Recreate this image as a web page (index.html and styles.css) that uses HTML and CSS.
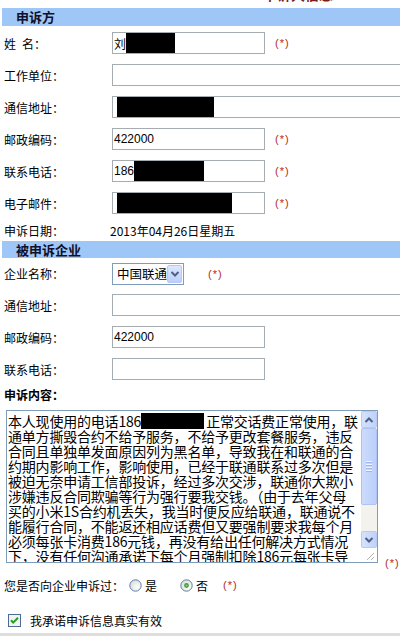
FILE: index.html
```html
<!DOCTYPE html>
<html lang="zh-CN">
<head>
<meta charset="utf-8">
<title>申诉信息</title>
<link rel="stylesheet" href="styles.css">
</head>
<body>
<div class="page">
  <div class="top-title"><span>申诉人信息</span></div>

  <div class="section-head">申诉方</div>
  <div class="rows first">
    <div class="row">
      <div class="label">姓&ensp;名：</div>
      <div class="input short"><span class="val">刘</span><span class="redact r-name"></span></div>
      <span class="req">(*)</span>
    </div>
    <div class="row">
      <div class="label">工作单位：</div>
      <div class="input long"></div>
    </div>
    <div class="row">
      <div class="label">通信地址：</div>
      <div class="input long"><span class="redact r-addr"></span></div>
    </div>
    <div class="row">
      <div class="label">邮政编码：</div>
      <div class="input short"><span class="val">422000</span></div>
      <span class="req">(*)</span>
    </div>
    <div class="row">
      <div class="label">联系电话：</div>
      <div class="input short"><span class="val">186</span><span class="redact r-phone"></span></div>
      <span class="req">(*)</span>
    </div>
    <div class="row">
      <div class="label">电子邮件：</div>
      <div class="input short"><span class="redact r-mail"></span></div>
      <span class="req">(*)</span>
    </div>
    <div class="row date-row">
      <div class="label">申诉日期：</div>
      <div class="date">2013年04月26日星期五</div>
    </div>
  </div>

  <div class="section-head second">被申诉企业</div>
  <div class="rows">
    <div class="row sel-row">
      <div class="label">企业名称：</div>
      <div class="select">
        <span class="sel-text">中国联通</span>
        <span class="sel-btn"><svg width="10" height="8" viewBox="0 0 10 8"><path d="M1.5 2 L5 5.5 L8.5 2" fill="none" stroke="#4d6185" stroke-width="2"/></svg></span>
      </div>
      <span class="req sel-req">(*)</span>
    </div>
    <div class="row">
      <div class="label">通信地址：</div>
      <div class="input long"></div>
    </div>
    <div class="row">
      <div class="label">邮政编码：</div>
      <div class="input short"><span class="val">422000</span></div>
    </div>
    <div class="row">
      <div class="label">联系电话：</div>
      <div class="input short"></div>
    </div>
  </div>

  <div class="content-title">申诉内容：</div>
  <div class="content-row">
    <div class="textarea">
      <div class="ta-text">
        <div class="line">本人现使用的电话186<span class="redact-inline"></span>正常交话费正常使用，联</div>
        <div class="line">通单方撕毁合约不给予服务，不给予更改套餐服务，违反</div>
        <div class="line">合同且单独单发面原因列为黑名单，导致我在和联通的合</div>
        <div class="line">约期内影响工作，影响使用，已经于联通联系过多次但是</div>
        <div class="line">被迫无奈申请工信部投诉，经过多次交涉，联通你大欺小</div>
        <div class="line">涉嫌违反合同欺骗等行为强行要我交钱。（由于去年父母</div>
        <div class="line">买的小米1S合约机丢失，我当时便反应给联通，联通说不</div>
        <div class="line">能履行合同，不能返还相应话费但又要强制要求我每个月</div>
        <div class="line">必须每张卡消费186元钱，再没有给出任何解决方式情况</div>
        <div class="line">下，没有任何沟通承诺下每个月强制扣除186元每张卡导</div>
      </div>
      <div class="scrollbar">
        <div class="sb-btn"><svg width="10" height="8" viewBox="0 0 10 8"><path d="M1.5 6 L5 2.5 L8.5 6" fill="none" stroke="#4d6185" stroke-width="2"/></svg></div>
        <div class="sb-thumb"><span class="grip"></span><span class="grip"></span><span class="grip"></span><span class="grip"></span></div>
        <div class="sb-track"></div>
        <div class="sb-btn"><svg width="10" height="8" viewBox="0 0 10 8"><path d="M1.5 2 L5 5.5 L8.5 2" fill="none" stroke="#4d6185" stroke-width="2"/></svg></div>
        <div class="sb-grip"><svg width="16" height="14" viewBox="0 0 16 14"><path d="M13 5 L6 12 M13 9 L10 12" stroke="#b4b4a8" stroke-width="1"/></svg></div>
      </div>
    </div>
    <span class="req ta-req">(*)</span>
  </div>

  <div class="radio-row">
    <span class="radio-label">您是否向企业申诉过：</span>
    <span class="radio"><svg width="13" height="13" viewBox="0 0 13 13"><defs><radialGradient id="rg" cx="0.65" cy="0.65" r="0.7"><stop offset="0" stop-color="#ffffff"/><stop offset="1" stop-color="#dcdcd6"/></radialGradient></defs><circle cx="6.5" cy="6.5" r="5.7" fill="url(#rg)" stroke="#5f7fa8" stroke-width="1"/></svg></span>
    <span class="opt">是</span>
    <span class="radio second-radio"><svg width="13" height="13" viewBox="0 0 13 13"><circle cx="6.5" cy="6.5" r="5.7" fill="url(#rg)" stroke="#5f7fa8" stroke-width="1"/><circle cx="6.5" cy="6.5" r="2.4" fill="#3aa23a"/><circle cx="6.5" cy="6.5" r="1.1" fill="#7fd17f"/></svg></span>
    <span class="opt">否</span>
    <span class="req radio-req">(*)</span>
  </div>

  <div class="check-row">
    <span class="checkbox"><svg width="13" height="13" viewBox="0 0 13 13"><rect x="0.5" y="0.5" width="12" height="12" fill="#f4f4ef" stroke="#4a6c94"/><path d="M3 6.2 L5.2 8.6 L10 3.8" fill="none" stroke="#21a121" stroke-width="2"/></svg></span>
    <span class="check-text">我承诺申诉信息真实有效</span>
  </div>
  <div class="bottom-band"></div>
</div>
</body>
</html>
```

FILE: styles.css
```css
html, body {
  margin: 0;
  padding: 0;
  overflow: hidden;
  background: #ffffff;
}

body {
  width: 400px;
  height: 636px;
  font-family: "Noto Sans CJK SC", "Liberation Sans", sans-serif;
  font-size: 12px;
  color: #000;
}

.page {
  display: flex;
  flex-direction: column;
}

.top-title {
  height: 8px;
  overflow: hidden;
  padding-left: 263px;
}

.top-title span {
  display: block;
  font-size: 14px;
  line-height: 14px;
  font-weight: bold;
  color: #7a1c1c;
  margin-top: -13px;
}

.section-head {
  margin-left: 2px;
  height: 18px;
  line-height: 18px;
  padding-left: 14px;
  background: #9ec6f6;
  font-size: 13px;
  font-weight: bold;
  color: #10102a;
}

.section-head.second {
  height: 17px;
  line-height: 17px;
}

.rows {
  display: flex;
  flex-direction: column;
}

.rows.first {
  margin-top: 1px;
}

.row {
  display: flex;
  align-items: center;
  height: 32px;
  padding-left: 4px;
  white-space: nowrap;
}

.row.date-row {
  height: 22px;
}

.row.sel-row {
  height: 31px;
}

.label {
  width: 108px;
  flex: none;
}

.date {
  margin-left: -2px;
  font-size: 12px;
}

.input {
  box-sizing: border-box;
  flex: none;
  height: 22px;
  border: 1px solid #a5acb2;
  background: #fff;
  display: flex;
  align-items: stretch;
  padding: 0 0 0 1px;
  font-family: "Liberation Sans", sans-serif;
  font-size: 12px;
}

.input .val {
  display: flex;
  align-items: center;
  font-family: "Liberation Sans", "Noto Sans CJK SC", sans-serif;
}

.input.short {
  width: 153px;
}

.input.long {
  width: 300px;
}

.redact {
  background: #000;
  display: block;
}

.r-name { width: 49px; }
.r-addr { width: 97px; margin-left: 3px; }
.r-phone { width: 70px; }
.r-mail { width: 115px; margin-left: 3px; }

.req {
  color: #b02a2a;
  font-family: "Liberation Sans", sans-serif;
  font-size: 11px;
  letter-spacing: 1px;
  margin-left: 10px;
  line-height: 12px;
}

.select {
  box-sizing: border-box;
  width: 72px;
  height: 22px;
  border: 1px solid #7f9db9;
  display: flex;
  align-items: center;
  padding: 0 1px 0 4px;
  flex: none;
}

.sel-text {
  flex: 1;
  font-size: 12.5px;
}

.sel-btn {
  box-sizing: border-box;
  width: 16px;
  height: 18px;
  border: 1px solid #b6c9f5;
  border-radius: 2px;
  background: linear-gradient(#dde7fd, #bccffa);
  display: flex;
  align-items: center;
  justify-content: center;
}

.sel-req {
  margin-left: 24px;
}

.content-title {
  height: 20px;
  line-height: 20px;
  padding-left: 4px;
  font-weight: bold;
}

.content-row {
  display: flex;
  align-items: flex-end;
  margin-top: 5px;
  padding-left: 6px;
  white-space: nowrap;
}

.textarea {
  box-sizing: border-box;
  width: 372px;
  height: 153px;
  border: 1px solid #7f9db9;
  display: flex;
  flex: none;
  overflow: hidden;
}

.ta-text {
  flex: 1;
  padding: 2px 0 0 1px;
  overflow: hidden;
  font-size: 14px;
  line-height: 15px;
  letter-spacing: -0.2px;
}

.line {
  white-space: nowrap;
}

.redact-inline {
  display: inline-block;
  width: 63px;
  height: 16px;
  background: #000;
  vertical-align: -2px;
  margin-right: 2px;
}

.scrollbar {
  width: 16px;
  flex: none;
  display: flex;
  flex-direction: column;
  background: #f3f2ec;
}

.sb-btn {
  box-sizing: border-box;
  height: 17px;
  border: 1px solid #b9cbf5;
  border-radius: 2px;
  background: linear-gradient(90deg, #d6e2fd, #c0d2fa);
  display: flex;
  align-items: center;
  justify-content: center;
}

.sb-thumb {
  box-sizing: border-box;
  height: 77px;
  border: 1px solid #aec3f3;
  border-radius: 2px;
  background: linear-gradient(90deg, #cddbfc, #bcd0fa);
  display: flex;
  flex-direction: column;
  align-items: center;
  justify-content: center;
  gap: 1px;
}

.grip {
  width: 6px;
  height: 1px;
  background: #eef3ff;
  border-bottom: 1px solid #9db7ee;
}

.sb-track {
  flex: 1;
}

.sb-grip {
  height: 14px;
  background: #fff;
  display: flex;
  align-items: flex-end;
}

.ta-req {
  margin-left: 7px;
  margin-bottom: -6px;
}

.radio-row {
  display: flex;
  align-items: center;
  height: 32px;
  margin-top: 6px;
  padding-left: 4px;
  white-space: nowrap;
}

.radio-label {
  width: 125px;
  flex: none;
}

.radio {
  display: flex;
  width: 13px;
  height: 13px;
}

.opt {
  margin-left: 3px;
}

.second-radio {
  margin-left: 23px;
}

.radio-req {
  margin-left: 15px;
}

.check-row {
  display: flex;
  align-items: center;
  height: 26px;
  margin-top: 6px;
  padding-left: 8px;
  white-space: nowrap;
}

.checkbox {
  display: flex;
  width: 13px;
  height: 13px;
}

.check-text {
  margin-left: 9px;
}

.bottom-band {
  height: 3px;
  background: #dedede;
}
```
